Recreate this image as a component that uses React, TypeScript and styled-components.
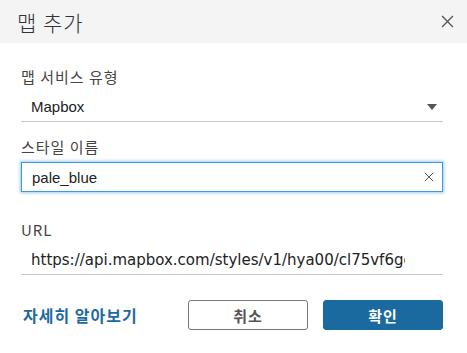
import React from "react";
import styled, { createGlobalStyle } from "styled-components";

const Global = createGlobalStyle`
  html, body { margin: 0; padding: 0; background: #fff; }
  body { font-family: "Liberation Sans", "Noto Sans CJK KR", Arial, sans-serif; }
`;

const Dialog = styled.div`
  width: 467px;
  height: 353px;
  background: #fff;
  display: flex;
  flex-direction: column;
`;

const Header = styled.div`
  height: 43px;
  background: #f4f4f4;
  display: flex;
  align-items: center;
  justify-content: space-between;
  padding: 0 12px 0 17px;
  box-sizing: border-box;
`;

const Title = styled.h1`
  margin: 0;
  font-family: "Noto Sans CJK KR", sans-serif;
  font-weight: 300;
  font-size: 21px;
  color: #333;
  letter-spacing: 1px;
`;

const CloseButton = styled.button`
  border: 0;
  background: none;
  padding: 0;
  width: 14px;
  height: 14px;
  display: flex;
  cursor: pointer;
`;

const Body = styled.div`
  padding: 25px 24px 0 21px;
  display: flex;
  flex-direction: column;
`;

const Field = styled.div<{ $gap?: number }>`
  display: flex;
  flex-direction: column;
  margin-bottom: ${(p) => p.$gap ?? 0}px;
`;

const Label = styled.label`
  font-family: "Noto Sans CJK KR", sans-serif;
  font-size: 15px;
  line-height: 18px;
  color: #444;
  letter-spacing: 1px;
  margin-bottom: 6px;
`;

const Underlined = styled.div`
  height: 29px;
  display: flex;
  align-items: center;
  justify-content: space-between;
  padding: 0 6px 0 10px;
  border-bottom: 1px solid #c8c8c8;
  font-size: 15px;
  color: #222;
`;

const InputBox = styled.div`
  height: 28px;
  display: flex;
  align-items: center;
  justify-content: space-between;
  padding: 0 8px 0 10px;
  border: 1px solid #3d9ae0;
  box-shadow: 0 0 3px 1px rgba(80, 160, 230, 0.55);
  font-size: 15px;
  color: #222;
`;

const Url = styled.span`
  font-family: "DejaVu Sans", sans-serif;
  font-size: 15px;
  color: #222;
  white-space: nowrap;
  overflow: hidden;
  width: 374px;
`;

const Footer = styled.div`
  display: flex;
  align-items: center;
  padding: 0 24px 0 23px;
  margin-top: 25px;
`;

const LearnMore = styled.a`
  font-family: "Noto Sans CJK KR", sans-serif;
  font-weight: 700;
  font-size: 16px;
  color: #1e6aa0;
  text-decoration: none;
  letter-spacing: 1px;
  margin-right: auto;
`;

const Button = styled.button<{ $primary?: boolean }>`
  width: 120px;
  height: 30px;
  box-sizing: border-box;
  border-radius: 3px;
  font-family: "Noto Sans CJK KR", sans-serif;
  font-weight: 700;
  font-size: 15px;
  letter-spacing: 1px;
  cursor: pointer;
  border: 1px solid ${(p) => (p.$primary ? "#1b6a9f" : "#777")};
  background: ${(p) => (p.$primary ? "#1b6a9f" : "#fff")};
  color: ${(p) => (p.$primary ? "#fff" : "#555")};
  & + & { margin-left: 15px; }
`;

const Cross = ({ size, color }: { size: number; color: string }) => (
  <svg width={size} height={size} viewBox="0 0 12 12">
    <path d="M1 1L11 11M11 1L1 11" stroke={color} strokeWidth="1.2" fill="none" />
  </svg>
);

export default function App() {
  return (
    <Dialog>
      <Global />
      <Header>
        <Title>맵 추가</Title>
        <CloseButton aria-label="닫기">
          <Cross size={13} color="#555" />
        </CloseButton>
      </Header>
      <Body>
        <Field $gap={16}>
          <Label>맵 서비스 유형</Label>
          <Underlined>
            <span style={{ fontWeight: 500 }}>Mapbox</span>
            <svg width="10" height="6" viewBox="0 0 10 6">
              <path d="M0 0H10L5 6Z" fill="#555" />
            </svg>
          </Underlined>
        </Field>
        <Field $gap={29}>
          <Label>스타일 이름</Label>
          <InputBox>
            <span>pale_blue</span>
            <Cross size={10} color="#555" />
          </InputBox>
        </Field>
        <Field>
          <Label>URL</Label>
          <Underlined>
            <Url>https://api.mapbox.com/styles/v1/hya00/cl75vf6gc</Url>
          </Underlined>
        </Field>
      </Body>
      <Footer>
        <LearnMore href="#">자세히 알아보기</LearnMore>
        <Button>취소</Button>
        <Button $primary>확인</Button>
      </Footer>
    </Dialog>
  );
}
